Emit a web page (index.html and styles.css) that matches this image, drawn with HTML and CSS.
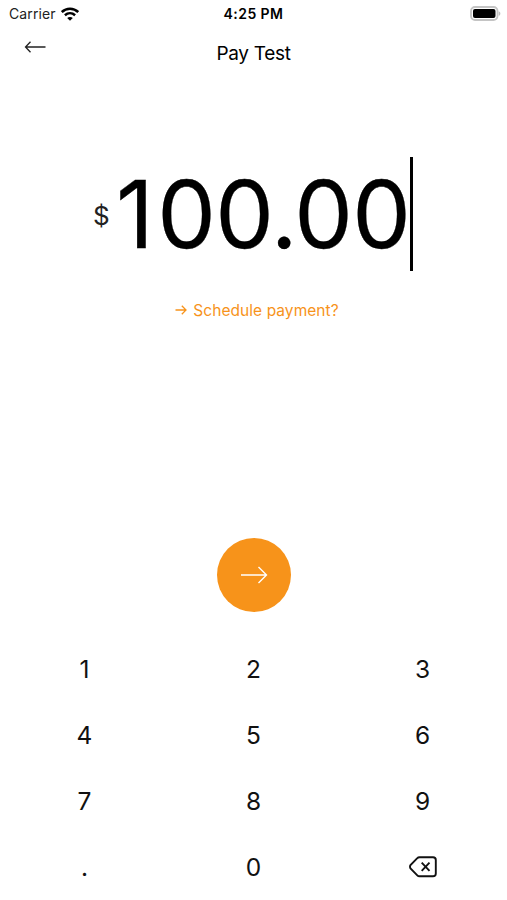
FILE: index.html
```html
<!DOCTYPE html>
<html lang="en">
<head>
<meta charset="utf-8">
<title>Pay Test</title>
<link rel="stylesheet" href="styles.css">
</head>
<body>
<div class="status">
  <div class="carrier"><span>Carrier</span>
    <svg class="wifi" viewBox="0 0 18 14" width="18" height="14"><g fill="none" stroke="#000" stroke-width="2.500"><path d="M.8 5C5.400.6 12.600.6 17.200 5"/><path d="M3.900 8.300c3-2.700 7.200-2.700 10.200 0"/></g><path d="M9 13.800 6.200 11c1.600-1.500 4-1.500 5.600 0z"/></svg>
  </div>
  <div class="time">4:25 PM</div>
  <svg class="battery" viewBox="0 0 31 15" width="31" height="15"><rect x="1" y="1" width="26.500" height="13" rx="4" fill="#fff" stroke="#c4c4c4" stroke-width="1.800"/><rect x="3" y="3" width="22.500" height="9" rx="2"/><path d="M28.700 5.200c2.200.8 2.200 3.800 0 4.600z" fill="#bdbdbd"/></svg>
</div>
<header class="header">
  <svg class="back" viewBox="0 0 22 12" width="22" height="12"><path d="M21.500 6H1.500M6.500.7l-5 5.300 5 5.300" fill="none" stroke="#222" stroke-width="1.300"/></svg>
  <h1>Pay Test</h1>
</header>
<main class="amount"><span class="currency">$</span><span class="value"><span class="lead">1</span>00.00</span><span class="caret"></span></main>
<div class="schedule">
  <svg viewBox="0 0 12 10" width="12" height="10"><path d="M.5 5h10.500M6.800.8 11 5 6.800 9.200" fill="none" stroke="#f7931a" stroke-width="1.300"/></svg>
  <span>Schedule payment?</span>
</div>
<div class="next"><svg viewBox="0 0 28 18" width="28" height="18"><path d="M1 9h25.500M18.500 1l8 8-8 8" fill="none" stroke="#fff" stroke-width="1.400"/></svg></div>
<div class="keys">
  <span>1</span><span>2</span><span>3</span><span>4</span><span>5</span><span>6</span><span>7</span><span>8</span><span>9</span><span>.</span><span>0</span>
  <span><svg viewBox="0 0 28 22" width="28" height="22"><path d="M10.500 1.200H24q2.800 0 2.800 2.800v13.500q0 2.800-2.800 2.800H10.500q-1.300 0-2.200-1L1.500 12.500q-1-1.700 0-3.400l6.800-6.900q.9-1 2.200-1zM12.700 6.700l7.800 8.200M20.500 6.700l-7.800 8.200" fill="none" stroke="#111" stroke-width="1.900"/></svg></span>
</div>
</body>
</html>
```
FILE: styles.css
```css
* { box-sizing: border-box; }
body { margin: 0; width: 507px; height: 900px; overflow: hidden; background: #fff; color: #000; font-family: Inter, sans-serif; display: flex; flex-direction: column; }
svg { display: block; flex: none; }
.status { height: 27px; display: grid; grid-template-columns: 1fr auto 1fr; align-items: center; padding: 0 6px 0 9px; }
.carrier { display: flex; align-items: center; gap: 5px; font-size: 14px; letter-spacing: 0.1px; color: #222; }
.time { font-size: 14px; font-weight: 600; letter-spacing: 0.450px; margin-right: 3px; }
.battery { justify-self: end; }
.header { height: 53px; display: grid; grid-template-columns: 1fr auto 1fr; padding: 0 24px; }
.back { margin-top: 14px; }
.header h1 { margin: 14px 0 0; font-size: 19px; line-height: 26px; font-weight: 400; letter-spacing: -0.300px; }
.amount { height: 114px; margin-top: 77px; padding-left: 93px; display: flex; align-items: center; }
.currency { width: 23px; padding-top: 2px; font-size: 26px; color: #222; }
.value { width: 294px; white-space: nowrap; font-size: 93px; line-height: 114px; letter-spacing: -0.800px; -webkit-text-stroke: 0.300px #000; }
.lead { letter-spacing: 3.500px; }
.caret { width: 3px; height: 114px; background: #000; }
.schedule { height: 24px; margin-top: 27px; padding-left: 7px; display: flex; justify-content: center; align-items: center; gap: 6px; color: #f7931a; font-size: 15.500px; letter-spacing: 0.060px; }
.next { width: 74px; height: 74px; margin: 216px auto 0; border-radius: 50%; background: #f7931a; display: flex; align-items: center; justify-content: center; }
.keys { margin-top: 24px; display: grid; grid-template-columns: repeat(3, 1fr); grid-auto-rows: 66px; font-size: 24.500px; color: #111; }
.keys span { display: flex; align-items: center; justify-content: center; }
```
